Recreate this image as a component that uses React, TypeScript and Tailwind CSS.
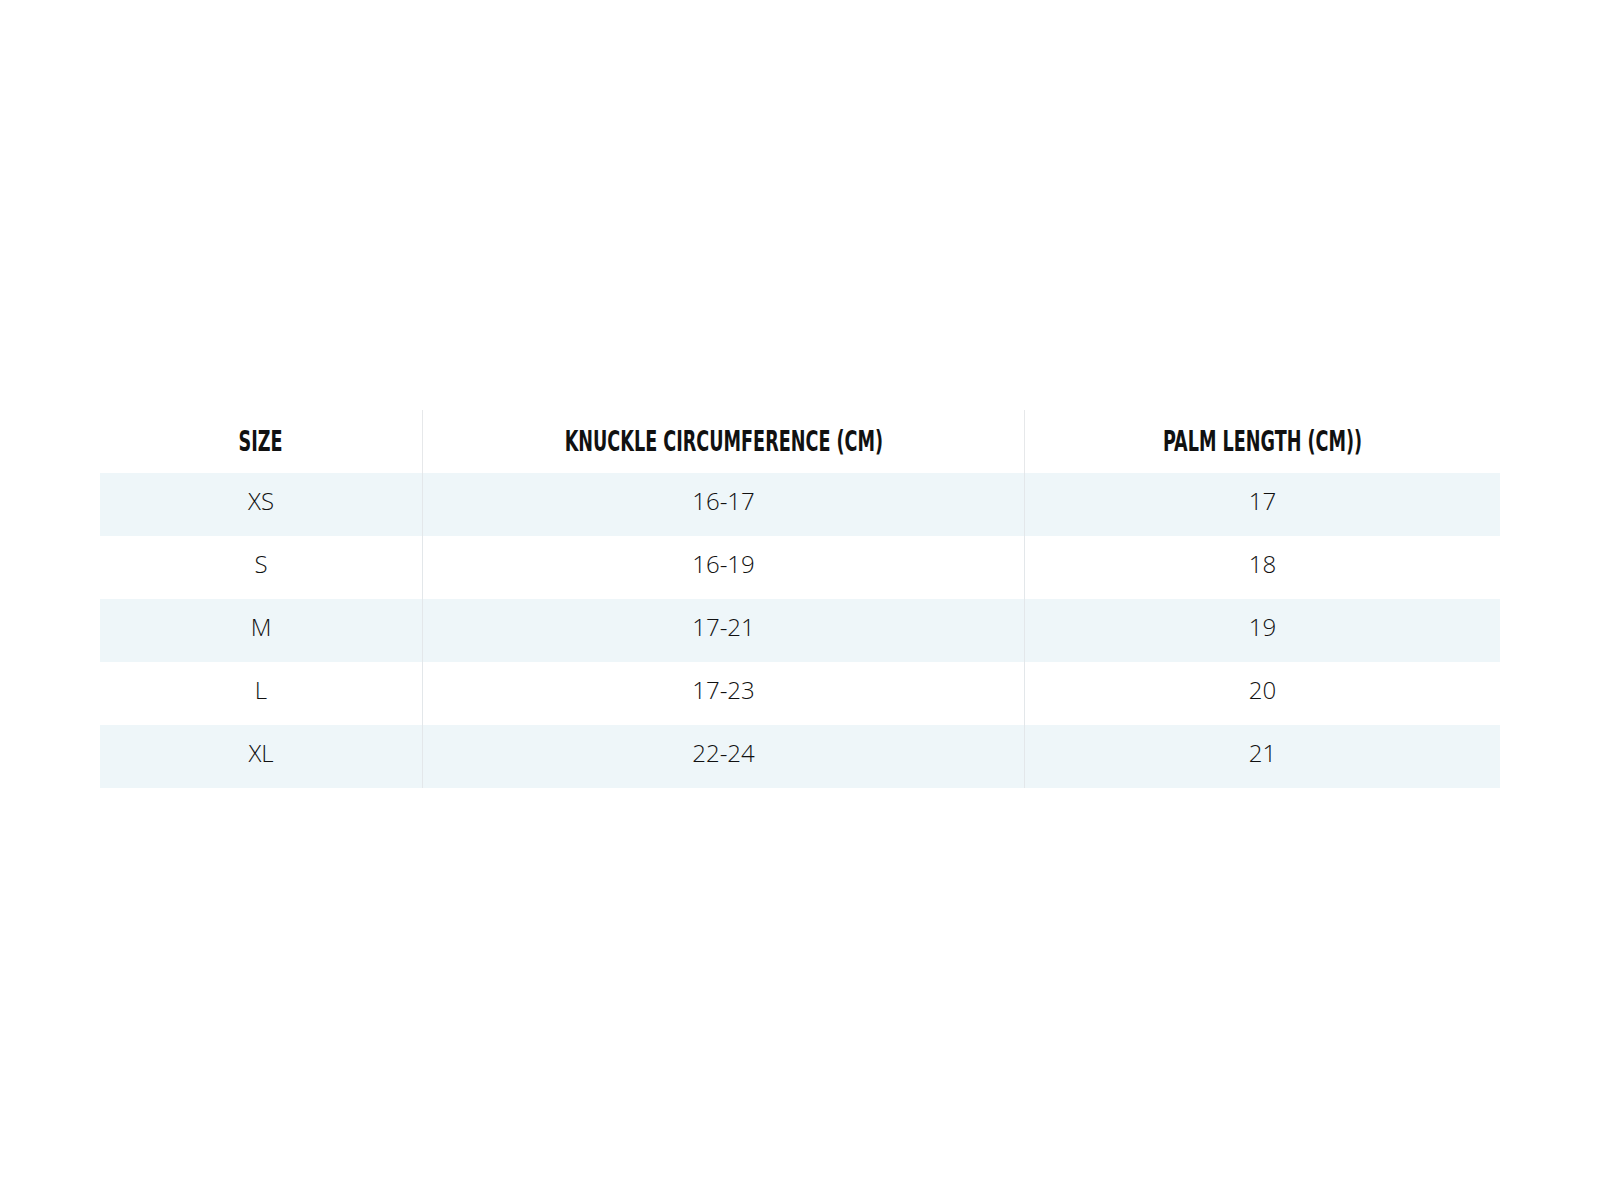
import React from "react";

const rows = [
  { size: "XS", knuckle: "16-17", palm: "17" },
  { size: "S", knuckle: "16-19", palm: "18" },
  { size: "M", knuckle: "17-21", palm: "19" },
  { size: "L", knuckle: "17-23", palm: "20" },
  { size: "XL", knuckle: "22-24", palm: "21" },
];

const headFont = {
  fontFamily: '"DejaVu Sans Condensed", "Liberation Sans", sans-serif',
};

const HeadCell = ({ label, last }: { label: string; last?: boolean }) => (
  <div
    className={`flex h-[63px] items-center justify-center ${last ? "" : "border-r border-[#e6e8ea]"}`}
  >
    <span
      className="inline-block origin-center scale-x-[0.675] text-[29px] font-bold uppercase leading-none text-[#111]"
      style={headFont}
    >
      {label}
    </span>
  </div>
);

const App = () => {
  return (
    <div className="min-h-[1200px] w-[1600px] bg-white pl-[100px] pt-[410px]">
      <div className="grid w-[1400px] grid-cols-[323px_602px_475px]">
        <HeadCell label="Size" />
        <HeadCell label="Knuckle Circumference (cm)" />
        <HeadCell label="Palm Length (cm))" last />

        {rows.map((r, i) => {
          const bg = i % 2 === 0 ? "bg-[#eef6f9]" : "bg-white";
          const cell =
            "flex h-[63px] items-center justify-center pb-[8px] font-['Open_Sans','Liberation_Sans',sans-serif] text-[24px] font-light text-[#111]";
          return (
            <React.Fragment key={r.size}>
              <div className={`${cell} ${bg} border-r border-[#e3e7ea]`}>{r.size}</div>
              <div className={`${cell} ${bg} border-r border-[#e3e7ea]`}>{r.knuckle}</div>
              <div className={`${cell} ${bg}`}>{r.palm}</div>
            </React.Fragment>
          );
        })}
      </div>
    </div>
  );
};

export default App;
